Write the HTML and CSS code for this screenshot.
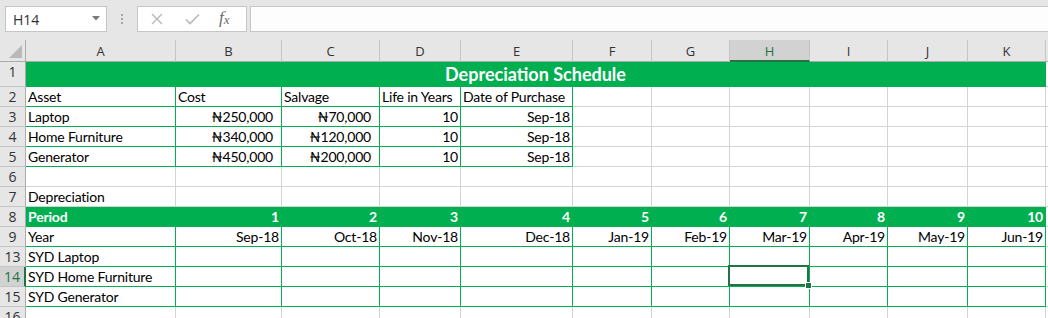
FILE: index.html
```html
<!DOCTYPE html>
<html lang="en">
<head>
    <meta charset="UTF-8">
    <title>Depreciation Schedule</title>
    <link rel="stylesheet" href="styles.css">
</head>
<body>
    <div class="topbar">
        <div class="namebox">
            <span>H14</span>
            <svg class="caret" width="8" height="5" viewBox="0 0 8 5"><path d="M0 0h8L4 4.5z" fill="#7a7a7a"/></svg>
        </div>
        <div class="grip"><i></i><i></i><i></i></div>
        <div class="fxbox">
            <svg width="12" height="12" viewBox="0 0 12 12"><path d="M1 1l10 10M11 1L1 11" stroke="#b8b8b8" stroke-width="1.4" fill="none"/></svg>
            <svg width="15" height="12" viewBox="0 0 15 12"><path d="M1 6.5l4 4L14 1.5" stroke="#b8b8b8" stroke-width="1.6" fill="none"/></svg>
            <span class="fx">f<sub>x</sub></span>
        </div>
        <div class="formula"></div>
    </div>

    <div class="sheet">
        <!-- column headers -->
        <div class="corner"><svg width="13" height="13" viewBox="0 0 13 13"><path d="M13 0V13H0z" fill="#b9b9b9"/></svg></div>
        <div class="hd">A</div><div class="hd">B</div><div class="hd">C</div><div class="hd">D</div>
        <div class="hd">E</div><div class="hd">F</div><div class="hd">G</div><div class="hd active">H</div>
        <div class="hd">I</div><div class="hd">J</div><div class="hd">K</div><div class="hd last"></div>

        <!-- row 1 -->
        <div class="rh">1</div>
        <div class="c fill title">Depreciation Schedule</div>
        <div class="c"></div>

        <!-- row 2 -->
        <div class="rh">2</div>
        <div class="c g">Asset</div><div class="c g">Cost</div><div class="c g">Salvage</div>
        <div class="c g">Life in Years</div><div class="c g">Date of Purchase</div>
        <div class="c"></div><div class="c"></div><div class="c"></div><div class="c"></div>
        <div class="c"></div><div class="c"></div><div class="c"></div>

        <!-- row 3 -->
        <div class="rh">3</div>
        <div class="c g">Laptop</div><div class="c g r cur">₦250,000</div><div class="c g r cur">₦70,000</div>
        <div class="c g r">10</div><div class="c g r">Sep-18</div>
        <div class="c"></div><div class="c"></div><div class="c"></div><div class="c"></div>
        <div class="c"></div><div class="c"></div><div class="c"></div>

        <!-- row 4 -->
        <div class="rh">4</div>
        <div class="c g">Home Furniture</div><div class="c g r cur">₦340,000</div><div class="c g r cur">₦120,000</div>
        <div class="c g r">10</div><div class="c g r">Sep-18</div>
        <div class="c"></div><div class="c"></div><div class="c"></div><div class="c"></div>
        <div class="c"></div><div class="c"></div><div class="c"></div>

        <!-- row 5 -->
        <div class="rh">5</div>
        <div class="c g">Generator</div><div class="c g r cur">₦450,000</div><div class="c g r cur">₦200,000</div>
        <div class="c g r">10</div><div class="c g r">Sep-18</div>
        <div class="c"></div><div class="c"></div><div class="c"></div><div class="c"></div>
        <div class="c"></div><div class="c"></div><div class="c"></div>

        <!-- row 6 -->
        <div class="rh">6</div>
        <div class="c"></div><div class="c"></div><div class="c"></div><div class="c"></div>
        <div class="c"></div><div class="c"></div><div class="c"></div><div class="c"></div>
        <div class="c"></div><div class="c"></div><div class="c"></div><div class="c"></div>

        <!-- row 7 -->
        <div class="rh">7</div>
        <div class="c">Depreciation</div><div class="c"></div><div class="c"></div><div class="c"></div>
        <div class="c"></div><div class="c"></div><div class="c"></div><div class="c"></div>
        <div class="c"></div><div class="c"></div><div class="c"></div><div class="c"></div>

        <!-- row 8 -->
        <div class="rh">8</div>
        <div class="c fill">Period</div>
        <div class="c fill r">1</div><div class="c fill r">2</div><div class="c fill r">3</div>
        <div class="c fill r">4</div><div class="c fill r">5</div><div class="c fill r">6</div>
        <div class="c fill r">7</div><div class="c fill r">8</div><div class="c fill r">9</div>
        <div class="c fill r">10</div>
        <div class="c"></div>

        <!-- row 9 -->
        <div class="rh">9</div>
        <div class="c g">Year</div>
        <div class="c g r">Sep-18</div><div class="c g r">Oct-18</div><div class="c g r">Nov-18</div>
        <div class="c g r">Dec-18</div><div class="c g r">Jan-19</div><div class="c g r">Feb-19</div>
        <div class="c g r">Mar-19</div><div class="c g r">Apr-19</div><div class="c g r">May-19</div>
        <div class="c g r">Jun-19</div>
        <div class="c"></div>

        <!-- row 13 -->
        <div class="rh">13</div>
        <div class="c g">SYD Laptop</div>
        <div class="c g"></div><div class="c g"></div><div class="c g"></div><div class="c g"></div><div class="c g"></div>
        <div class="c g"></div><div class="c g"></div><div class="c g"></div><div class="c g"></div><div class="c g"></div>
        <div class="c"></div>

        <!-- row 14 -->
        <div class="rh active">14</div>
        <div class="c g">SYD Home Furniture</div>
        <div class="c g"></div><div class="c g"></div><div class="c g"></div><div class="c g"></div><div class="c g"></div>
        <div class="c g"></div><div class="c g selected"></div><div class="c g"></div><div class="c g"></div><div class="c g"></div>
        <div class="c"></div>

        <!-- row 15 -->
        <div class="rh">15</div>
        <div class="c g">SYD Generator</div>
        <div class="c g"></div><div class="c g"></div><div class="c g"></div><div class="c g"></div><div class="c g"></div>
        <div class="c g"></div><div class="c g"></div><div class="c g"></div><div class="c g"></div><div class="c g"></div>
        <div class="c"></div>

        <!-- row 16 -->
        <div class="rh">16</div>
        <div class="c"></div><div class="c"></div><div class="c"></div><div class="c"></div>
        <div class="c"></div><div class="c"></div><div class="c"></div><div class="c"></div>
        <div class="c"></div><div class="c"></div><div class="c"></div><div class="c"></div>
    </div>
</body>
</html>
```

FILE: styles.css
```css
body {
    margin: 0;
    background-color: white;
    font-family: Lato, 'Liberation Sans', sans-serif;
    overflow: hidden;
}

/* Formula bar */
.topbar {
    height: 40px;
    box-sizing: border-box;
    background-color: #e6e6e6;
    display: flex;
    align-items: flex-start;
    padding: 6px 0 0 5px;
}
.namebox {
    width: 102px;
    height: 26px;
    box-sizing: border-box;
    background-color: white;
    border: 1px solid #c6c6c6;
    display: flex;
    align-items: center;
    justify-content: space-between;
    padding: 0 6px 0 7px;
    font-family: 'Open Sans', sans-serif;
    font-size: 14px;
    color: #333;
}
.caret {
    margin-top: -2px;
}
.grip {
    width: 30px;
    height: 26px;
    display: flex;
    flex-direction: column;
    align-items: center;
    justify-content: center;
    gap: 2px;
}
.grip i {
    width: 2px;
    height: 2px;
    background-color: #a6a6a6;
}
.fxbox {
    width: 110px;
    height: 26px;
    box-sizing: border-box;
    background-color: white;
    border: 1px solid #c6c6c6;
    display: flex;
    align-items: center;
    padding-left: 13px;
    gap: 22px;
}
.fx {
    font-family: 'Liberation Serif', serif;
    font-style: italic;
    font-size: 17px;
    color: #6b6b6b;
    margin-left: -3px;
    margin-top: -3px;
}
.fx sub {
    font-size: 13px;
    vertical-align: -1px;
}
.formula {
    flex: 1;
    height: 26px;
    box-sizing: border-box;
    margin-left: 3px;
    background-color: #fdfdfd;
    border: 1px solid #c6c6c6;
    border-right: none;
}

/* Grid */
.sheet {
    display: grid;
    grid-template-columns: 26px 150px 106px 98px 81px 112px 79px 78px 80px 78px 80px 78px 1fr;
    grid-template-rows: 22px 25px;
    grid-auto-rows: 20px;
}
.corner, .hd, .rh {
    box-sizing: border-box;
    background-color: #e6e6e6;
    font-family: 'Open Sans', sans-serif;
    font-size: 13px;
    color: #333;
}
.corner {
    border-right: 1px solid #ababab;
    border-bottom: 1px solid #ababab;
    display: flex;
    align-items: flex-end;
    justify-content: flex-end;
    padding: 0 3px 3px 0;
}
.hd {
    border-right: 1px solid #c4c4c4;
    border-bottom: 1px solid #ababab;
    text-align: center;
    line-height: 22px;
}
.hd.last {
    border-right: none;
}
.rh {
    border-right: 1px solid #ababab;
    border-bottom: 1px solid #c4c4c4;
    text-align: center;
    font-size: 14px;
    line-height: 20px;
}
.hd.active {
    background-color: #d2d2d2;
    color: #217346;
    border-bottom: 2px solid #217346;
}
.rh.active {
    background-color: #d2d2d2;
    color: #217346;
    border-right: 2px solid #217346;
}

.c {
    box-sizing: border-box;
    border-right: 1px solid #d4d4d4;
    border-bottom: 1px solid #d4d4d4;
    padding: 0 2px;
    font-size: 14px;
    letter-spacing: -0.2px;
    line-height: 19px;
    color: black;
    white-space: nowrap;
    overflow: hidden;
}
.c.g {
    border-color: #00b050;
}
.c.fill {
    background-color: #00b050;
    border-color: #00b050;
    color: white;
    font-weight: bold;
}
.c.r {
    text-align: right;
}
.c.cur {
    padding-right: 8px;
}
.title {
    grid-column: 2 / 13;
    text-align: center;
    font-size: 18px;
    letter-spacing: 0;
    line-height: 25px;
}

/* Active cell */
.selected {
    position: relative;
    overflow: visible;
    z-index: 1;
}
.selected::after {
    content: '';
    position: absolute;
    top: -2px;
    left: -2px;
    right: 0;
    bottom: 0;
    border: 2px solid #217346;
}
.selected::before {
    content: '';
    position: absolute;
    right: -3px;
    bottom: -3px;
    width: 5px;
    height: 5px;
    background-color: #217346;
    border: 1px solid white;
    z-index: 2;
}
```
